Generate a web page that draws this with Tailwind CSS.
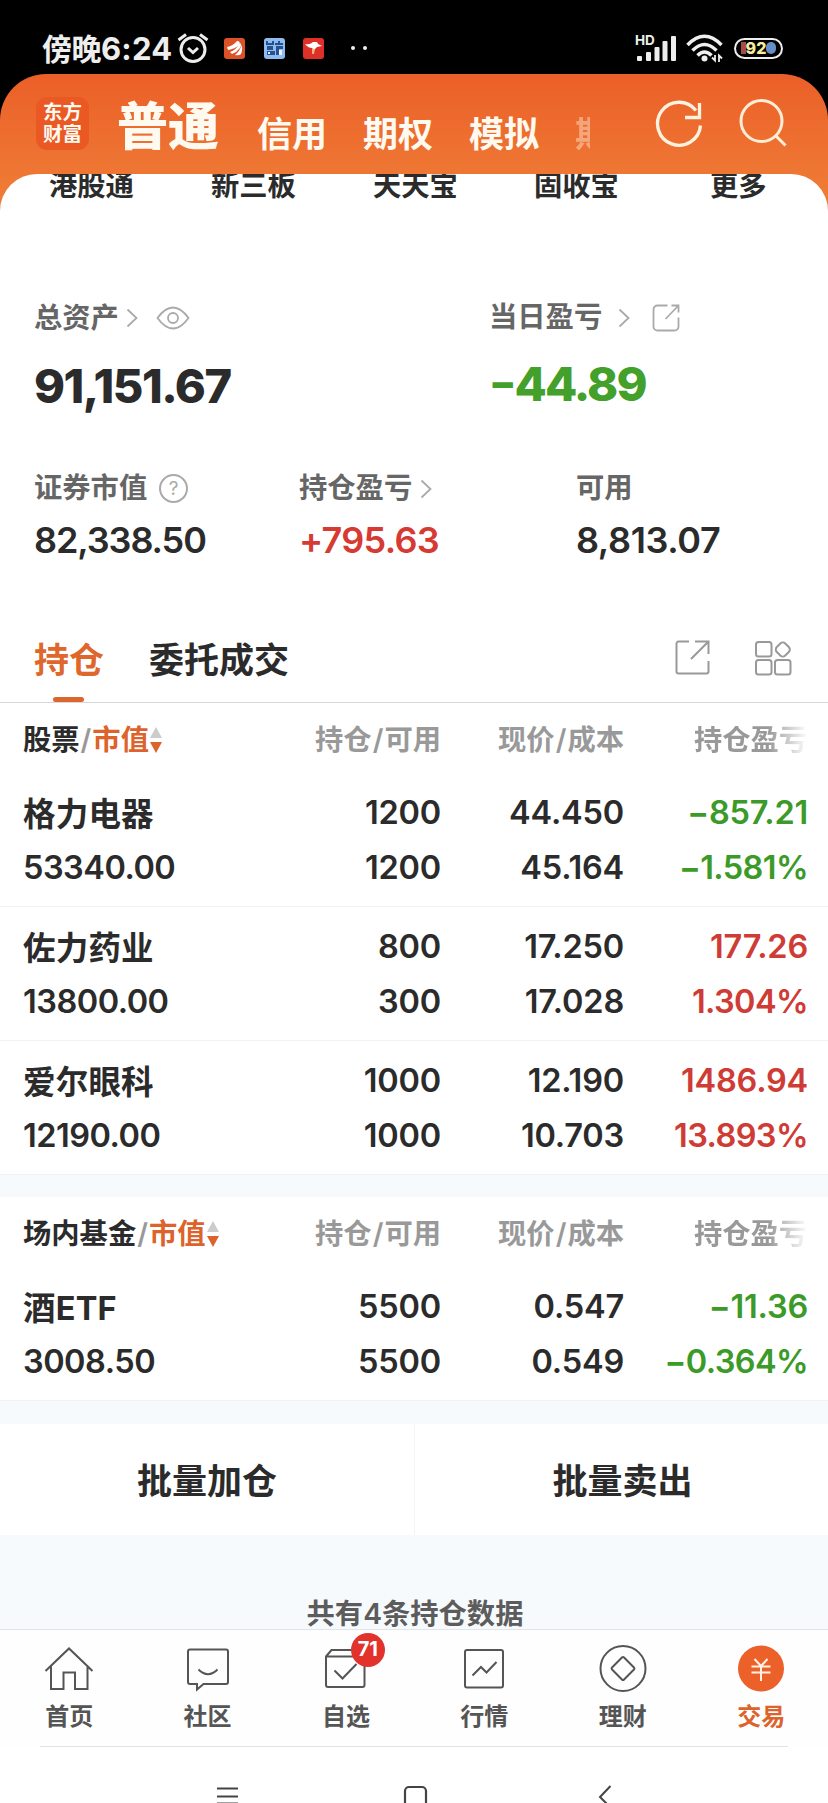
<!DOCTYPE html>
<html lang="zh-CN">
<head>
  <meta charset="UTF-8" />
  <title>东方财富 - 交易</title>
  <meta name="viewport" content="width=device-width, initial-scale=1" />
  <script src="https://cdn.jsdelivr.net/npm/@tailwindcss/browser@4"></script>
</head>
<body class="bg-white text-[#2b2b2b] font-['Inter','Noto_Sans_CJK_SC',sans-serif] font-semibold w-[828px] h-[1803px] overflow-hidden">

  <div class="bg-black">
    <!-- Status bar -->
    <div class="h-[74px] pt-[23px] pl-[42px] pr-[45px] flex items-start justify-between text-[#eeeeee]">
      <div class="h-[52px] flex items-center">
        <span class="text-[30px] font-bold tracking-[-0.5px] leading-none whitespace-nowrap w-[135px] mb-[1px]">傍晚<span class="text-[31px] tracking-[0.2px]">6:24</span></span>
        <svg class="w-[32px] h-[30px] mb-[3px]" viewBox="0 0 32 30" fill="none" stroke="#eee" stroke-width="3">
          <circle cx="16" cy="16.5" r="12" />
          <path d="M11 15l5 4.500 5-4.500M1.500 7L9 1.500M23 1.500L30.500 7" />
        </svg>
        <svg class="w-[21px] h-[21px] ml-[15px] mb-[2px]" viewBox="0 0 21 21">
          <rect width="21" height="21" rx="3" fill="#dd5128" />
          <path d="M3 9Q9 8 13 3Q17 3 15 7Q11 11 4 12ZM6 14Q12 12 16 5Q18 6 16 10Q13 14 8 16ZM11 17Q16 13 17.500 7Q19 11 17 16Q15 18 11 17Z" fill="#fff" />
        </svg>
        <svg class="w-[21px] h-[21px] ml-[19px] mb-[2px]" viewBox="0 0 21 21">
          <rect width="21" height="21" rx="3" fill="#8fbcf0" />
          <path d="M2 3h2v2h4V3h2v4H2zM11 5h3V3h2v2h3v2h-8zM3 8h6v4H3zM12 8h7v3h-4v6h-3zM3 13h8v4H3z" fill="#27508c" />
          <path d="M4 14h2v2H4zM15 12h3v5h-3z" fill="#e7f1ff" />
        </svg>
        <svg class="w-[21px] h-[21px] ml-[18px] mb-[2px]" viewBox="0 0 21 21">
          <rect width="21" height="21" rx="3" fill="#de3029" />
          <path d="M2 6Q7 7 10 4L14 4L15 6L19 8L14 9L11 12L9 10Q5 10 2 6Z" fill="#fff" />
          <path d="M9 11h3l-1 5H9z" fill="#f4b17c" />
        </svg>
        <div class="flex gap-[8px] ml-[27px] mb-[2px]">
          <i class="w-1 h-1 rounded-full bg-[#eee]"></i>
          <i class="w-1 h-1 rounded-full bg-[#eee]"></i>
        </div>
      </div>
      <div class="h-[52px] flex items-center pb-[2px]">
        <svg class="w-[42px] h-[30px] overflow-visible" viewBox="0 0 42 30" fill="#eee">
          <text x="0" y="12" font-size="13.500" font-weight="700">HD</text>
          <rect x="2" y="23" width="5" height="5" rx="1" />
          <rect x="11" y="19" width="5" height="9" rx="1" />
          <rect x="19.500" y="14" width="5" height="14" rx="1" />
          <rect x="27.500" y="8" width="5" height="20" rx="1" />
          <rect x="36" y="3" width="5" height="25" rx="1" />
        </svg>
        <svg class="w-[38px] h-[30px] ml-[9px]" viewBox="0 0 38 30" fill="none" stroke="#eee" stroke-width="3.500">
          <path d="M1.500 12Q18.500 -5.500 35.500 12M6.500 17.500Q18.500 5.500 30.500 17.500M11.500 22.500Q18.500 15.500 25.500 22.500" />
          <circle cx="18.500" cy="25.500" r="3" fill="#eee" stroke="none" />
          <path d="M29 22v5.500l-3-3M33 29v-6.500l3 3" stroke-width="1.800" />
        </svg>
        <div class="ml-[10px] w-[49px] h-[21px] rounded-full border-2 border-[#eee] flex items-center justify-center">
          <i class="w-[5px] h-[12px] bg-[#a84a4a]"></i>
          <span class="text-[16px] leading-none font-extrabold text-[#f5ee9f]">92</span>
          <i class="w-[10px] h-[12px] rounded-full bg-[#658fc7]"></i>
        </div>
      </div>
    </div>

    <!-- Header -->
    <div class="rounded-t-[46px] bg-linear-to-b from-[#eb5f28] to-[#ef7c36] to-[125px]">
      <div class="h-[100px] flex text-[#fffaf0]">
        <div class="mt-[23px] ml-[36px] w-[53px] h-[53px] shrink-0 rounded-[11px] bg-[#ea5824] text-[19.500px] leading-[22px] font-bold text-center pt-[4px]">东方<br />财富</div>
        <div class="ml-[28px] w-[104px] shrink-0 text-[51px] leading-[106px] font-black whitespace-nowrap">普通</div>
        <div class="w-[342px] shrink-0 ml-[36px] flex gap-[36px] text-[35px] leading-[120px] font-bold whitespace-nowrap">
          <span>信用</span><span>期权</span><span>模拟</span>
          <span class="block w-[15px] shrink-0 overflow-hidden opacity-40">期</span>
        </div>
        <svg class="w-[48px] h-[50px] shrink-0 mt-[26px] ml-[56px]" viewBox="0 0 48 50" fill="none" stroke="#fff3df" stroke-width="3.300">
          <path d="M41 10.500A21.500 21.500 0 1 0 45.500 25.500M44.500 3v14.500H30" />
        </svg>
        <svg class="w-[48px] h-[50px] shrink-0 mt-[25px] ml-[36px]" viewBox="0 0 48 50" fill="none" stroke="#ffedd5" stroke-width="3">
          <circle cx="22.500" cy="22" r="20.500" />
          <path d="M36 36L46.500 46.500" />
        </svg>
      </div>

      <!-- Shortcut row, scrolled half under the header -->
      <div class="h-[126px] rounded-t-[37px] bg-white overflow-hidden">
        <div class="h-[24px] w-full flex items-center text-[28.300px] leading-none whitespace-nowrap">
          <span class="ml-[49px] w-[162px]">港股通</span>
          <span class="w-[162px]">新三板</span>
          <span class="w-[161px]">天天宝</span>
          <span class="w-[176px]">固收宝</span>
          <span>更多</span>
        </div>
      </div>
    </div>
  </div>

  <!-- Asset summary -->
  <div class="flex pl-[34px] h-[170px]">
    <div class="w-[455px]">
      <div class="h-[36px] flex items-center text-[28.300px] leading-none text-[#666]">
        总资产
        <svg class="w-[12px] h-[20px] ml-[7px]" viewBox="0 0 12 20" fill="none" stroke="#aaa" stroke-width="1.800"><path d="M1.500 1.500l9 8.500-9 8.500" /></svg>
        <svg class="w-[34px] h-[24px] ml-[18px]" viewBox="0 0 34 24" fill="none" stroke="#aaa" stroke-width="1.800">
          <path d="M1.500 12Q9 1.500 17 1.500T32.500 12Q25 22.500 17 22.500T1.500 12Z" />
          <circle cx="17" cy="12" r="5" />
        </svg>
      </div>
      <div class="mt-[19px] h-[60px] flex items-center text-[47px] leading-none font-extrabold tracking-[-1.500px]">91,151.67</div>
    </div>
    <div>
      <div class="h-[35px] flex items-center text-[28.300px] leading-none text-[#666]">
        当日盈亏
        <svg class="w-[12px] h-[20px] ml-[16px]" viewBox="0 0 12 20" fill="none" stroke="#aaa" stroke-width="1.800"><path d="M1.500 1.500l9 8.500-9 8.500" /></svg>
        <svg class="w-[28px] h-[28px] ml-[22px]" viewBox="0 0 28 28" fill="none" stroke="#aaa" stroke-width="1.800">
          <path d="M15.500 1.500H5.500a4 4 0 0 0-4 4v17a4 4 0 0 0 4 4h17a4 4 0 0 0 4-4v-9M19.500 1.500h7v7M26.500 1.500L13.500 15" />
        </svg>
      </div>
      <div class="mt-[18px] h-[60px] flex items-center text-[47px] leading-none font-extrabold tracking-[-1.900px] text-[#42a02b]"><span class="text-[40px]">−</span>44.89</div>
    </div>
  </div>
  <div class="flex pl-[34px] h-[146px]">
    <div class="w-[265px]">
      <div class="h-[37px] flex items-center text-[28.300px] leading-none text-[#666]">
        证券市值
        <span class="ml-[12px] w-[29px] h-[29px] rounded-full border-2 border-[#aaa] text-[#aaa] text-[19px] font-normal flex items-center justify-center">?</span>
      </div>
      <div class="mt-[13px] h-[40px] flex items-center text-[36px] leading-none tracking-[-1.100px]">82,338.50</div>
    </div>
    <div class="w-[277px]">
      <div class="h-[37px] flex items-center text-[28.300px] leading-none text-[#666]">
        持仓盈亏
        <svg class="w-[12px] h-[20px] ml-[8px]" viewBox="0 0 12 20" fill="none" stroke="#aaa" stroke-width="1.800"><path d="M1.500 1.500l9 8.500-9 8.500" /></svg>
      </div>
      <div class="mt-[13px] h-[40px] flex items-center text-[36px] leading-none tracking-[-0.700px] text-[#d63a33]">+795.63</div>
    </div>
    <div>
      <div class="h-[37px] flex items-center text-[28.300px] leading-none text-[#666]">可用</div>
      <div class="mt-[13px] h-[40px] flex items-center text-[36px] leading-none tracking-[-0.400px]">8,813.07</div>
    </div>
  </div>

  <!-- Tabs -->
  <div class="h-[87px] pl-[34px] pr-[36px] flex border-b border-[#d8d8d8] text-[35px] leading-[88px] font-bold">
    <div class="w-[70px] relative text-[#e0672b]">持仓
      <i class="absolute left-[19px] bottom-0 w-[31px] h-[5px] rounded-full bg-[#dd662c]"></i>
    </div>
    <div class="ml-[45px]">委托成交</div>
    <div class="ml-auto flex gap-[44px] pt-[23px]">
      <svg class="w-[36px] h-[36px]" viewBox="0 0 36 36" fill="none" stroke="#999" stroke-width="2">
        <path d="M15 2.500H4.500a2 2 0 0 0-2 2v28a2 2 0 0 0 2 2h28a2 2 0 0 0 2-2V22M21 2.500h13.500V15M34.500 2.500L17 20" />
      </svg>
      <svg class="w-[38px] h-[37px]" viewBox="0 0 38 37" fill="none" stroke="#999" stroke-width="2">
        <rect x="2" y="3" width="15.500" height="14.500" rx="2.500" />
        <rect x="2" y="21" width="15.500" height="14.500" rx="2.500" />
        <rect x="21" y="21" width="15.500" height="14.500" rx="2.500" />
        <rect x="22.800" y="4.500" width="12" height="12" rx="3.500" transform="rotate(45 28.800 10.500)" />
      </svg>
    </div>
  </div>

  <!-- Holdings, filled by renderGroup() -->
  <div id="stocks"></div>
  <div class="h-[22px] bg-[#f7fafd]"></div>
  <div id="funds"></div>
  <div class="h-[23px] bg-[#f7fafd]"></div>

  <!-- Batch actions -->
  <div class="h-[111px] flex text-[35px] leading-[115px] font-bold text-center">
    <div class="w-[415px] border-r border-[#f3f4f5]">批量加仓</div>
    <div class="flex-1 pl-[2px]">批量卖出</div>
  </div>

  <div class="h-[95px] bg-[#f7fafd] border-b border-[#dfe5ea] flex justify-center pt-[65px] pl-[2px] text-[28.300px] leading-[28px] text-[#5c5c5c]">共有4条持仓数据</div>

  <!-- Bottom nav -->
  <div class="h-[116px] bg-[#fefefe] flex text-[24px] text-[#555]">
    <div class="w-[138.400px] shrink-0 flex flex-col items-center pt-[13px]">
      <svg class="w-[50px] h-[50px]" viewBox="0 0 50 50" fill="none" stroke="#555" stroke-width="2">
        <path d="M1.500 28L25 5.500 48.500 28M7 23.500V46H19.500V29.500H31V46H43.500V23.500" />
      </svg>
      <span class="leading-[48px]">首页</span>
    </div>
    <div class="w-[138.400px] shrink-0 flex flex-col items-center pt-[13px]">
      <svg class="w-[50px] h-[50px]" viewBox="0 0 50 50" fill="none" stroke="#555" stroke-width="2">
        <path d="M7 6.500H43a2 2 0 0 1 2 2V39a2 2 0 0 1-2 2H20.500L14 46.500V41H7a2 2 0 0 1-2-2V8.500a2 2 0 0 1 2-2ZM15.500 26.500Q25 36 34.500 26.500" />
      </svg>
      <span class="leading-[48px]">社区</span>
    </div>
    <div class="w-[138.400px] shrink-0 flex flex-col items-center pt-[13px] relative">
      <svg class="w-[50px] h-[50px]" viewBox="0 0 50 50" fill="none" stroke="#555" stroke-width="2">
        <path d="M5 13.500L10.500 7H38L43.500 13.500V42a2 2 0 0 1-2 2H7a2 2 0 0 1-2-2ZM5 13.500H43.500M13.500 27.500L21.500 35.500 35.500 21" />
      </svg>
      <span class="leading-[48px]">自选</span>
      <span class="absolute left-[74px] top-[3px] w-[34px] h-[34px] rounded-full bg-[#e2322c] text-white text-[20px] leading-[33px] font-bold text-center">71</span>
    </div>
    <div class="w-[138.400px] shrink-0 flex flex-col items-center pt-[13px]">
      <svg class="w-[50px] h-[50px]" viewBox="0 0 50 50" fill="none" stroke="#555" stroke-width="2">
        <rect x="6" y="7" width="38" height="37.500" rx="2" />
        <path d="M13.500 32.500L22 24 27.500 29.500 37.500 19" />
      </svg>
      <span class="leading-[48px]">行情</span>
    </div>
    <div class="w-[138.400px] shrink-0 flex flex-col items-center pt-[13px]">
      <svg class="w-[50px] h-[50px]" viewBox="0 0 50 50" fill="none" stroke="#555" stroke-width="2">
        <circle cx="25" cy="25.500" r="22.500" />
        <rect x="16.500" y="17" width="17" height="17" rx="1.500" transform="rotate(45 25 25.500)" />
      </svg>
      <span class="leading-[48px]">理财</span>
    </div>
    <div class="w-[138.400px] shrink-0 flex flex-col items-center pt-[13px] text-[#dc632b]">
      <svg class="w-[50px] h-[50px]" viewBox="0 0 50 50" fill="none" stroke="#fff3e6" stroke-width="2">
        <circle cx="25" cy="25.500" r="23" fill="#ec602a" stroke="none" />
        <path d="M18.500 16L25 23 31.500 16M15.500 23.500H34.500M15.500 29.500H34.500M25 23V38" />
      </svg>
      <span class="leading-[48px]">交易</span>
    </div>
  </div>
  <div class="mx-[40px] h-px bg-[#e3e3e3]"></div>

  <!-- System navigation -->
  <div class="h-[57px] pt-[38px] pl-[215px] flex items-start">
    <svg class="w-[26px] h-[19px]" viewBox="0 0 26 19" stroke="#444" stroke-width="2"><path d="M2 3.500H23M2 11.500H23M2 18.500H23" /></svg>
    <svg class="w-[26px] h-[19px] ml-[161px] overflow-hidden" viewBox="0 0 26 19" fill="none" stroke="#444" stroke-width="2.200"><rect x="3" y="2" width="21" height="21" rx="4" /></svg>
    <svg class="w-[16px] h-[19px] ml-[170px]" viewBox="0 0 16 19" fill="none" stroke="#444" stroke-width="2"><path d="M12.500 1L2 12 10 20" /></svg>
  </div>

  <script>
    const stocks = [
      { name: "格力电器", value: "53340.00", hold: "1200", avail: "1200", price: "44.450", cost: "45.164", profit: "−857.21", rate: "−1.581%" },
      { name: "佐力药业", value: "13800.00", hold: "800", avail: "300", price: "17.250", cost: "17.028", profit: "177.26", rate: "1.304%" },
      { name: "爱尔眼科", value: "12190.00", hold: "1000", avail: "1000", price: "12.190", cost: "10.703", profit: "1486.94", rate: "13.893%" }
    ];
    const funds = [
      { name: "酒ETF", value: "3008.50", hold: "5500", avail: "5500", price: "0.547", cost: "0.549", profit: "−11.36", rate: "−0.364%" }
    ];

    function renderGroup(id, title, rows) {
      const head = `<div class="h-[70px] pt-[4px] pl-[23px] pr-[20px] grid grid-cols-[235px_183px_183px_184px] items-center text-[28.300px] leading-none text-right text-[#999] whitespace-nowrap">
        <div class="flex items-center"><span class="text-[#2b2b2b]">${title}</span><span class="px-[1px]">/</span><span class="text-[#dc632b]">市值</span>
          <svg class="w-[12px] h-[26px] ml-[1px]" viewBox="0 0 12 26"><path d="M0 11L6 0l6 11z" fill="#ccc" /><path d="M0 15h12L6 26z" fill="#dc632b" /></svg>
        </div>
        <div>持仓<span class="px-[1px]">/</span>可用</div>
        <div>现价<span class="px-[1px]">/</span>成本</div>
        <div class="justify-self-end w-[114px] text-left mask-r-from-65% mask-r-to-100%">持仓盈亏</div>
      </div>`;
      const body = rows.map(d => {
        const color = d.profit.startsWith("−") ? "text-[#3c9a28]" : "text-[#cf3b35]";
        return `<div class="h-[134px] pt-[13px] pl-[23px] pr-[20px] grid grid-cols-[235px_183px_183px_184px] grid-rows-[55px_55px] items-center border-b border-[#f0f2f4] text-[32.500px] leading-none tracking-[-0.200px] text-right whitespace-nowrap">
          <div class="text-left tracking-[0.200px] font-bold pt-[3px]">${d.name}</div><div>${d.hold}</div><div>${d.price}</div><div class="${color}">${d.profit}</div>
          <div class="text-left tracking-[-0.500px]">${d.value}</div><div>${d.avail}</div><div>${d.cost}</div><div class="tracking-[-0.600px] ${color}">${d.rate}</div>
        </div>`;
      }).join("");
      document.getElementById(id).innerHTML = head + body;
    }

    renderGroup("stocks", "股票", stocks);
    renderGroup("funds", "场内基金", funds);
  </script>
</body>
</html>
